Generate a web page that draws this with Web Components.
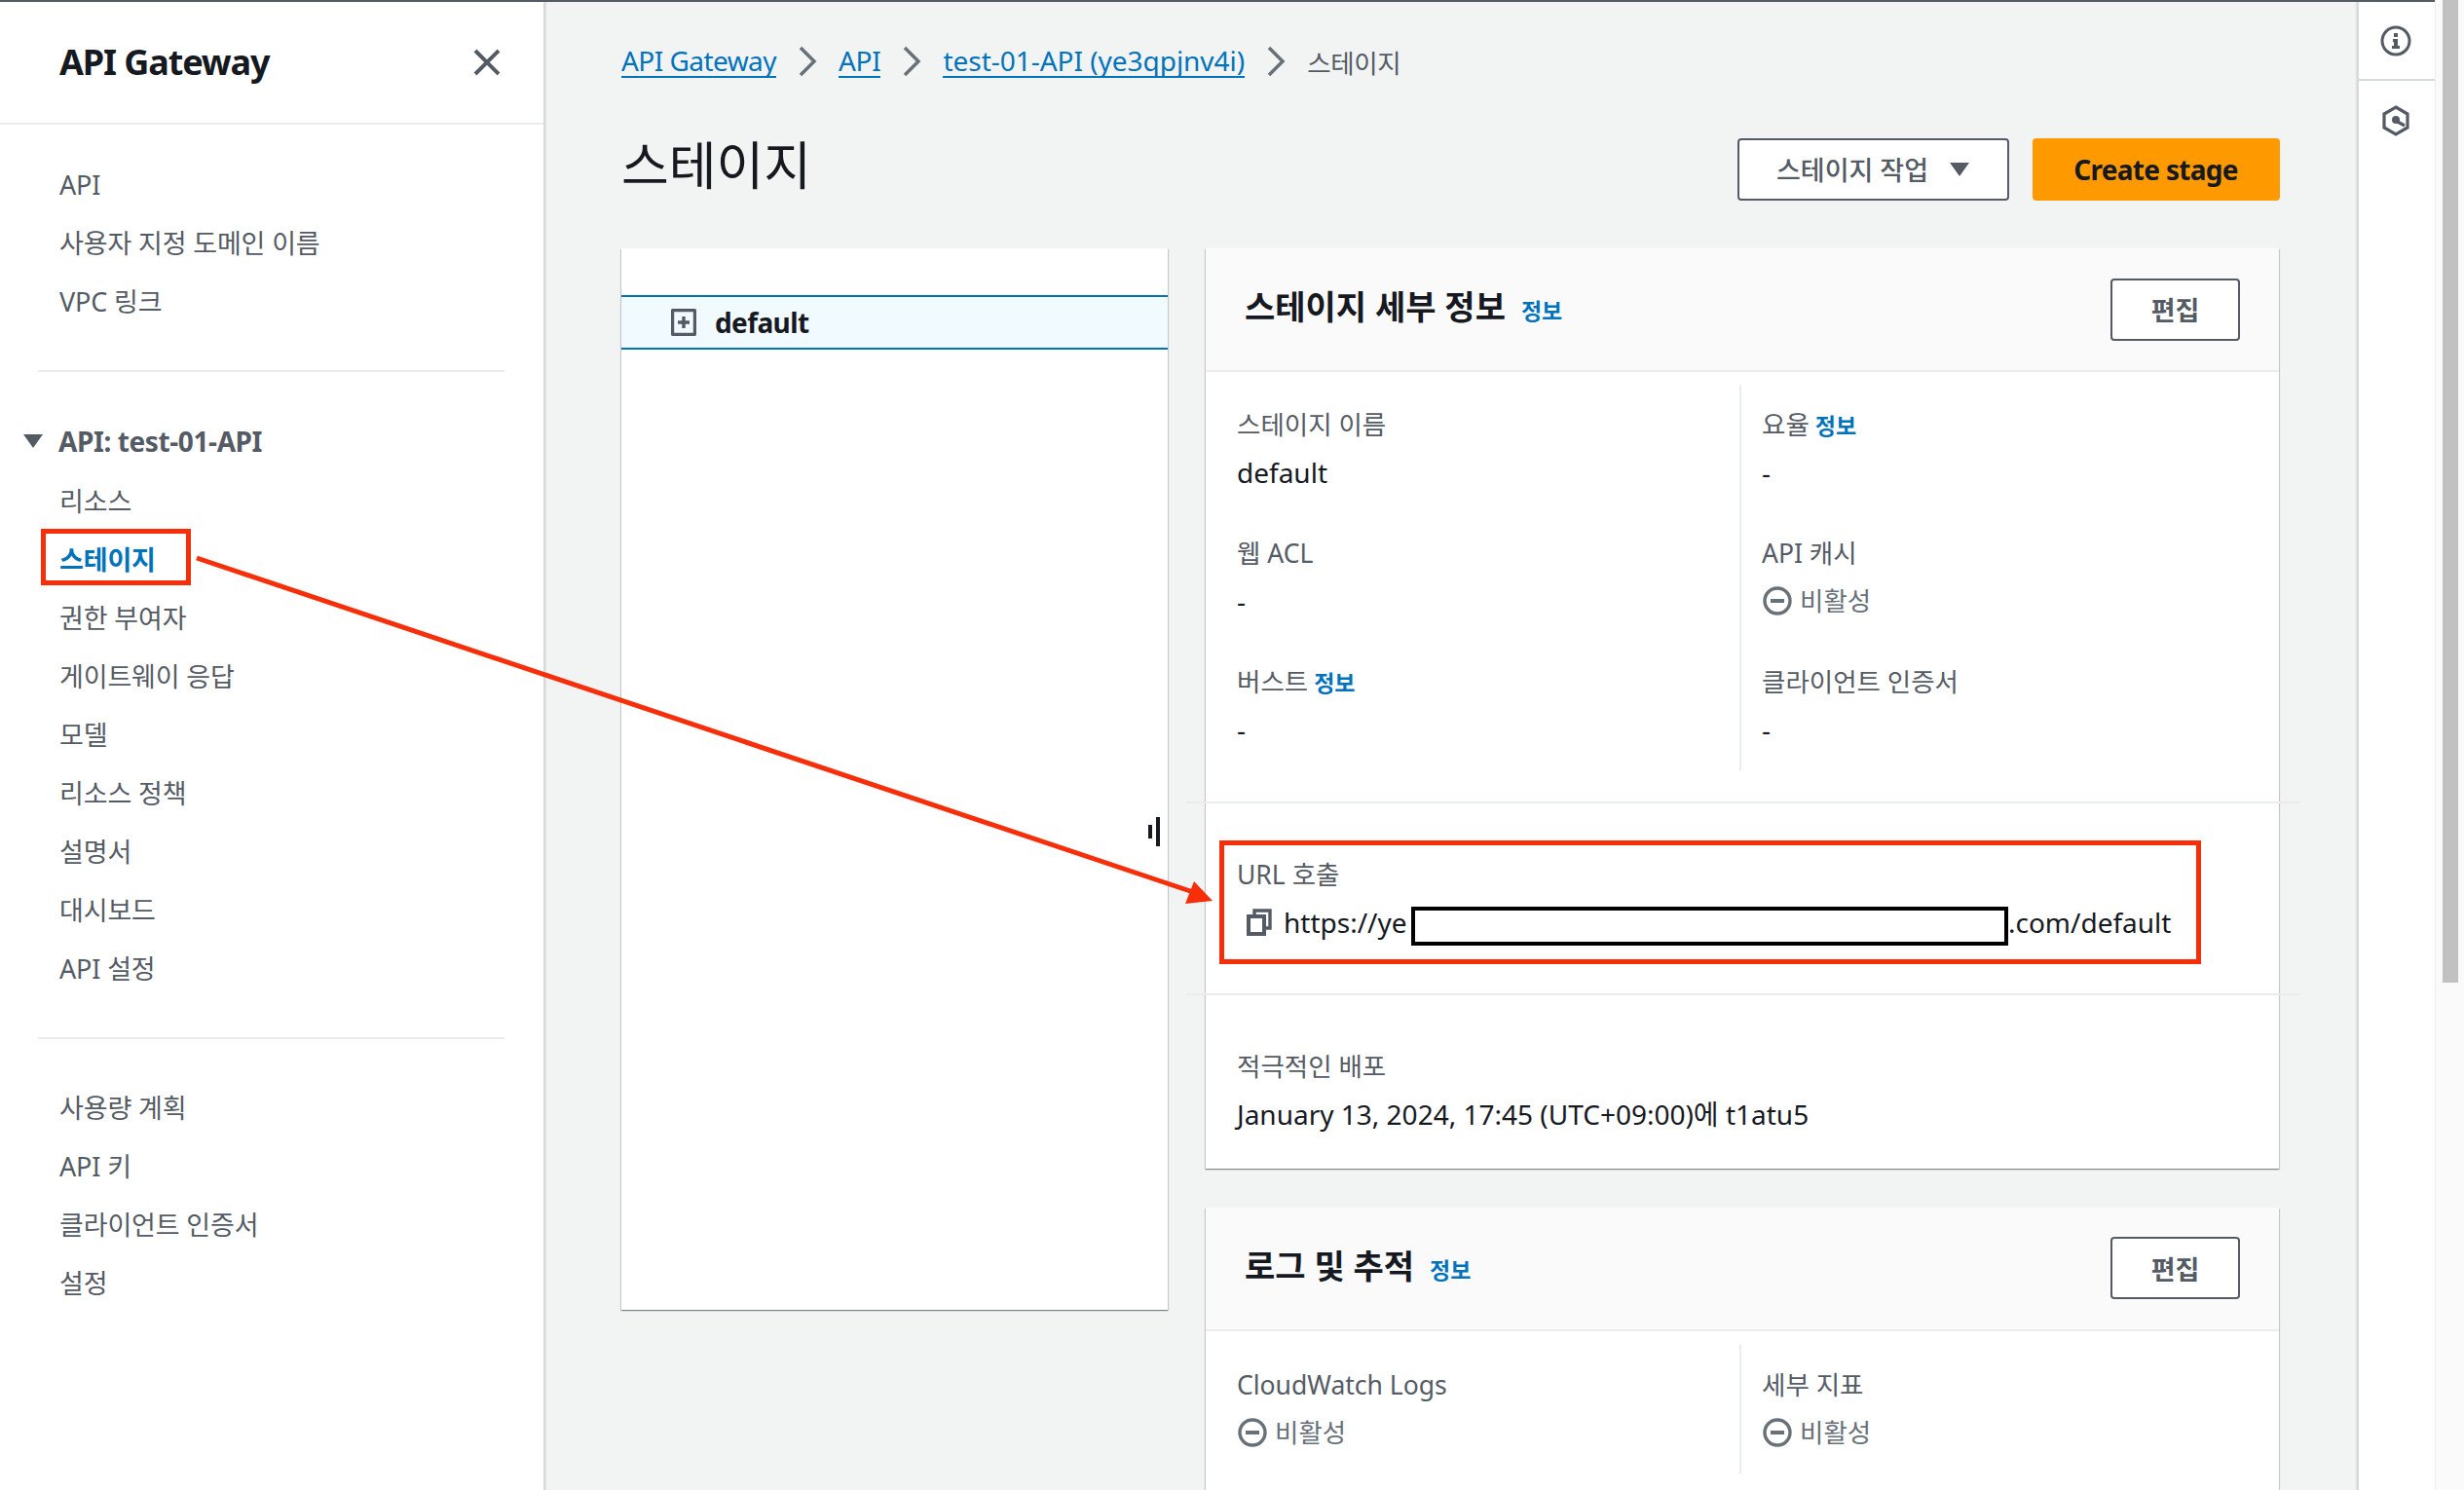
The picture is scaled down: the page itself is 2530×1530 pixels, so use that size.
<!DOCTYPE html>
<html lang="ko">
<head>
<meta charset="utf-8">
<title>스테이지 - API Gateway</title>
<style>
    html, body { margin: 0; height: 1530px; overflow: hidden; }
    body { font-family: "Noto Sans", "Noto Sans CJK KR", sans-serif; font-size: 28px; color: #16191f; background: #f2f3f3; }
</style>
</head>
<body>

<aws-console>
    <aws-sidebar slot="nav" heading="API Gateway">
        <nav-list>
            <nav-item>API</nav-item>
            <nav-item>사용자 지정 도메인 이름</nav-item>
            <nav-item>VPC 링크</nav-item>
        </nav-list>
        <nav-rule></nav-rule>
        <nav-list>
            <nav-group>API: test-01-API</nav-group>
            <nav-item>리소스</nav-item>
            <nav-item active>스테이지</nav-item>
            <nav-item>권한 부여자</nav-item>
            <nav-item>게이트웨이 응답</nav-item>
            <nav-item>모델</nav-item>
            <nav-item>리소스 정책</nav-item>
            <nav-item>설명서</nav-item>
            <nav-item>대시보드</nav-item>
            <nav-item>API 설정</nav-item>
        </nav-list>
        <nav-rule></nav-rule>
        <nav-list>
            <nav-item>사용량 계획</nav-item>
            <nav-item>API 키</nav-item>
            <nav-item>클라이언트 인증서</nav-item>
            <nav-item>설정</nav-item>
        </nav-list>
    </aws-sidebar>

    <bread-crumbs>
        <a style="letter-spacing: -.55px">API Gateway</a><a>API</a><a style="letter-spacing: -.03px">test-01-API (ye3qpjnv4i)</a><span>스테이지</span>
    </bread-crumbs>

    <page-head>
        <span slot="title">스테이지</span>
        <aws-button caret>스테이지 작업</aws-button>
        <aws-button primary>Create stage</aws-button>
    </page-head>

    <stage-split>
        <stage-tree slot="tree">default</stage-tree>

        <detail-card heading="스테이지 세부 정보">
            <aws-button slot="action" small>편집</aws-button>
            <field-grid>
                <kv-field label="스테이지 이름">default</kv-field>
                <kv-field label="요율" info>-</kv-field>
                <kv-field label="웹 ACL">-</kv-field>
                <kv-field label="API 캐시"><status-off>비활성</status-off></kv-field>
                <kv-field label="버스트" info>-</kv-field>
                <kv-field label="클라이언트 인증서">-</kv-field>
            </field-grid>
            <card-section>
                <kv-field label="URL 호출"><invoke-url></invoke-url></kv-field>
            </card-section>
            <card-section last>
                <kv-field label="적극적인 배포">January 13, 2024, 17:45 (UTC+09:00)에 t1atu5</kv-field>
            </card-section>
        </detail-card>

        <detail-card heading="로그 및 추적">
            <aws-button slot="action" small>편집</aws-button>
            <field-grid style="padding-top: 14px">
                <kv-field label="CloudWatch Logs"><status-off>비활성</status-off></kv-field>
                <kv-field label="세부 지표"><status-off>비활성</status-off></kv-field>
            </field-grid>
        </detail-card>
    </stage-split>

    <tools-rail slot="tools"></tools-rail>
</aws-console>

<mark-up></mark-up>

<script>
const ICON_STROKE = '#545b64';

class AwsConsole extends HTMLElement {
    connectedCallback() {
        this.attachShadow({mode: 'open'}).innerHTML = `
            <style>
                :host { display: grid; grid-template-columns: 560px 1fr 80px 30px; grid-template-rows: 2px 1528px; height: 1530px; overflow: hidden; }
                .bar { grid-column: 1 / 4; background: #545b64; }
                main { padding: 0 78px; min-width: 0; }
                .track { grid-column: 4; grid-row: 1 / 3; background: #fafafa; border-left: 1px solid #ececec; padding-left: 7px; }
                .thumb { width: 16px; height: 1009px; background: #c1c1c1; }
            </style>
            <div class="bar"></div>
            <div class="track"><div class="thumb"></div></div>
            <slot name="nav"></slot>
            <main><slot></slot></main>
            <slot name="tools"></slot>`;
    }
}

class AwsSidebar extends HTMLElement {
    connectedCallback() {
        this.attachShadow({mode: 'open'}).innerHTML = `
            <style>
                :host { display: block; background: #fff; border-right: 2px solid #d5dbdb; box-shadow: 1px 0 1px rgba(0,0,0,.06); box-sizing: border-box; }
                header { height: 126px; box-sizing: border-box; border-bottom: 2px solid #eaeded; display: flex; align-items: center; justify-content: space-between; padding: 0 43px 0 61px; }
                h2 { margin: 0; font-size: 36px; font-weight: 700; letter-spacing: -1.1px; color: #16191f; margin-top: -2px; }
                svg { display: block; }
                .body { padding-top: 32px; }
            </style>
            <header>
                <h2>${this.getAttribute('heading')}</h2>
                <svg width="30" height="30" viewBox="0 0 30 30"><path d="M3 3 27 27M27 3 3 27" stroke="${ICON_STROKE}" stroke-width="4" fill="none"/></svg>
            </header>
            <div class="body"><slot></slot></div>`;
    }
}

class NavList extends HTMLElement {
    connectedCallback() {
        this.attachShadow({mode: 'open'}).innerHTML = `
            <style>:host { display: block; }</style><slot></slot>`;
    }
}

class NavItem extends HTMLElement {
    connectedCallback() {
        this.attachShadow({mode: 'open'}).innerHTML = `
            <style>
                :host { display: block; height: 60px; line-height: 60px; padding-left: 61px; color: #545b64; font-size: 27px; letter-spacing: -.15px; white-space: nowrap; }
                :host([active]) { color: #0073bb; font-weight: 700; }
            </style><slot></slot>`;
    }
}

class NavGroup extends HTMLElement {
    connectedCallback() {
        this.attachShadow({mode: 'open'}).innerHTML = `
            <style>
                :host { display: flex; align-items: center; height: 61.5px; padding: 0 0 1.5px 24px; box-sizing: border-box; gap: 16px; color: #545b64; font-size: 28px; font-weight: 700; letter-spacing: -.4px; white-space: nowrap; }
                svg { display: block; }
            </style>
            <svg width="20" height="16" viewBox="0 0 20 16"><path d="M0 1h20L10 15z" fill="${ICON_STROKE}"/></svg>
            <span><slot></slot></span>`;
    }
}

class NavRule extends HTMLElement {
    connectedCallback() {
        this.attachShadow({mode: 'open'}).innerHTML = `
            <style>:host { display: block; height: 2px; background: #eaeded; margin: 40px 40px 41px 39px; }</style>`;
    }
}

class BreadCrumbs extends HTMLElement {
    connectedCallback() {
        const root = this.attachShadow({mode: 'open'});
        const parts = [...this.children];
        const cell = el => el.tagName === 'A'
            ? `<a style="${el.getAttribute('style') || ''}">${el.textContent}</a>`
            : `<span>${el.textContent}</span>`;
        root.innerHTML = `
            <style>
                :host { display: flex; align-items: center; height: 122px; font-size: 28px; letter-spacing: -.3px; white-space: nowrap; }
                a { color: #0073bb; border-bottom: 2px solid #0073bb; line-height: 32px; }
                span { color: #545b64; font-size: 26.5px; }
                svg { display: block; margin: 0 22px; }
            </style>
            ${parts.map((el, i) => cell(el) +
                (i < parts.length - 1 ? `<svg width="20" height="32" viewBox="0 0 20 32"><path d="M3 2 17 16 3 30" stroke="#687078" stroke-width="3.5" fill="none"/></svg>` : '')).join('')}`;
    }
}

class PageHead extends HTMLElement {
    connectedCallback() {
        this.attachShadow({mode: 'open'}).innerHTML = `
            <style>
                :host { display: flex; align-items: center; gap: 24px; height: 84px; margin-bottom: 39.5px; margin-top: 7.5px; padding-right: 1.5px; }
                .title { flex: 1; font-size: 53px; line-height: 84px; color: #16191f; margin-top: -8px; }
            </style>
            <div class="title"><slot name="title"></slot></div>
            <slot></slot>`;
    }
}

class AwsButton extends HTMLElement {
    connectedCallback() {
        const caret = this.hasAttribute('caret') ? `<svg width="20" height="16" viewBox="0 0 20 16"><path d="M0 1h20L10 15z" fill="${ICON_STROKE}"/></svg>` : '';
        this.attachShadow({mode: 'open'}).innerHTML = `
            <style>
                :host { display: inline-flex; align-items: center; justify-content: center; gap: 22px; height: 64px; box-sizing: border-box; padding: 0 38px; background: #fff; border: 2px solid #545b64; border-radius: 4px; color: #545b64; font-size: 27px; font-weight: 700; white-space: nowrap; }
                :host([primary]) { background: #ff9900; border-color: #ff9900; color: #16191f; width: 254px; padding: 0; font-size: 28px; letter-spacing: -.7px; }
                :host([small]) { width: 133px; padding: 0; }
                :host([caret]) { width: 279px; padding: 0; font-weight: 500; }
                svg { display: block; }
            </style><slot></slot>${caret}`;
    }
}

class StageSplit extends HTMLElement {
    connectedCallback() {
        this.attachShadow({mode: 'open'}).innerHTML = `
            <style>
                :host { display: grid; grid-template-columns: 561px 1102px; column-gap: 39px; align-items: start; }
                .cards { display: flex; flex-direction: column; gap: 40px; }
            </style>
            <slot name="tree"></slot>
            <div class="cards"><slot></slot></div>`;
    }
}

class StageTree extends HTMLElement {
    connectedCallback() {
        this.attachShadow({mode: 'open'}).innerHTML = `
            <style>
                :host { display: block; position: relative; height: 1090px; background: #fff; box-shadow: 0 1px 1px 0 rgba(0,28,36,.3), 1px 1px 1px 0 rgba(0,28,36,.15), -1px 1px 1px 0 rgba(0,28,36,.15); }
                .row { position: relative; top: 48px; height: 56px; box-sizing: border-box; border-top: 2px solid #0073bb; border-bottom: 2px solid #0073bb; background: #f1faff; display: flex; align-items: center; padding-left: 51px; gap: 19px; font-weight: 700; letter-spacing: -.6px; color: #16191f; }
                svg { display: block; }
                .grip { position: absolute; left: 541px; top: 584px; width: 12px; height: 30px; }
            </style>
            <div class="row">
                <svg width="26" height="28" viewBox="0 0 26 28"><rect x="1.5" y="1.5" width="23" height="25" rx="1" fill="none" stroke="${ICON_STROKE}" stroke-width="3.4"/><path d="M13 8v12M7 14h12" stroke="${ICON_STROKE}" stroke-width="3.4"/></svg>
                <span><slot></slot></span>
            </div>
            <svg class="grip" viewBox="0 0 12 30"><path d="M0 8h4v14H0zM8 0h4v30H8z" fill="#16191f"/></svg>`;
    }
}

class DetailCard extends HTMLElement {
    connectedCallback() {
        this.attachShadow({mode: 'open'}).innerHTML = `
            <style>
                :host { display: block; background: #fff; box-shadow: 0 1px 1px 0 rgba(0,28,36,.3), 1px 1px 1px 0 rgba(0,28,36,.15), -1px 1px 1px 0 rgba(0,28,36,.15); }
                header { height: 127px; box-sizing: border-box; background: #fafafa; border-bottom: 2px solid #eaeded; display: flex; align-items: center; justify-content: space-between; padding: 0 40px; }
                h2 { margin: 0; font-size: 34px; font-weight: 700; color: #16191f; display: flex; align-items: baseline; gap: 16px; margin-top: -8px; }
                h2 small { font-size: 23px; color: #0073bb; }
            </style>
            <header>
                <h2>${this.getAttribute('heading')}<small>정보</small></h2>
                <slot name="action"></slot>
            </header>
            <slot></slot>`;
    }
}

class FieldGrid extends HTMLElement {
    connectedCallback() {
        this.attachShadow({mode: 'open'}).innerHTML = `
            <style>
                :host { display: grid; grid-template-columns: 550px 1fr; padding: 13px 0 32px; }
                ::slotted(kv-field:nth-child(odd)) { border-right: 2px solid #eaeded; }
            </style><slot></slot>`;
    }
}

class KvField extends HTMLElement {
    connectedCallback() {
        const info = this.hasAttribute('info') ? '<small>정보</small>' : '';
        this.attachShadow({mode: 'open'}).innerHTML = `
            <style>
                :host { display: block; padding: 18px 20px 0 32px; height: 132px; box-sizing: border-box; }
                :host(:nth-child(even)) { padding-left: 21px; }
                .label { color: #545b64; font-size: 26.5px; line-height: 47px; height: 47px; display: flex; gap: 6px; align-items: baseline; white-space: nowrap; }
                .label small { font-size: 23px; color: #0073bb; font-weight: 700; }
                .value { color: #16191f; font-size: 28px; line-height: 50px; white-space: nowrap; }
            </style>
            <div class="label">${this.getAttribute('label')}${info}</div>
            <div class="value"><slot></slot></div>`;
    }
}

class CardSection extends HTMLElement {
    connectedCallback() {
        this.attachShadow({mode: 'open'}).innerHTML = `
            <style>
                :host { display: block; position: relative; height: 197px; margin: 0; padding-top: 30px; box-sizing: border-box; }
                :host([last]) { height: 179.5px; }
                .rule { position: absolute; left: -20px; right: -22px; top: 0; height: 2px; background: #eaeded; }
                ::slotted(kv-field) { height: auto; padding-top: 22px; }
            </style>
            <div class="rule"></div><slot></slot>`;
    }
}

class StatusOff extends HTMLElement {
    connectedCallback() {
        this.attachShadow({mode: 'open'}).innerHTML = `
            <style>
                :host { display: flex; align-items: center; gap: 8px; color: #687078; font-size: 26.5px; margin-left: 1px; }
                svg { display: block; }
            </style>
            <svg width="30" height="30" viewBox="0 0 30 30"><circle cx="15" cy="15" r="13" fill="none" stroke="#687078" stroke-width="3.4"/><path d="M8 15h14" stroke="#687078" stroke-width="4"/></svg>
            <span><slot></slot></span>`;
    }
}

class InvokeUrl extends HTMLElement {
    connectedCallback() {
        this.attachShadow({mode: 'open'}).innerHTML = `
            <style>
                :host { display: flex; align-items: center; height: 50px; margin-left: 10px; width: 950px; }
                svg { display: block; margin-right: 12px; flex: none; }
                .cut { width: 613px; flex: none; height: 40px; box-sizing: border-box; border: 4px solid #000; background: #fff; margin: 0 -13px 0 4px; position: relative; top: 4px; z-index: 1; }
            </style>
            <svg width="26" height="28" viewBox="0 0 26 28"><path d="M8 7V2h16v18h-6" fill="none" stroke="${ICON_STROKE}" stroke-width="3.4"/><rect x="2" y="8" width="16" height="18" fill="none" stroke="${ICON_STROKE}" stroke-width="4"/></svg>
            <span>https://ye</span><div class="cut"></div><span>s.com/default</span>`;
    }
}

class ToolsRail extends HTMLElement {
    connectedCallback() {
        this.attachShadow({mode: 'open'}).innerHTML = `
            <style>
                :host { display: block; background: #fff; border-left: 2px solid #d5dbdb; box-sizing: border-box; box-shadow: -1px 0 1px rgba(0,0,0,.08); }
                div { height: 81px; border-bottom: 2px solid #d5dbdb; box-sizing: border-box; display: flex; justify-content: center; padding: 24px 2px 0 0; }
                div + div { border: 0; padding-top: 25px; }
                svg { display: block; }
            </style>
            <div><svg width="32" height="32" viewBox="0 0 32 32"><circle cx="16" cy="16" r="14" fill="none" stroke="${ICON_STROKE}" stroke-width="3"/><path d="M14 8h4v4h-4zM13 14h5v7h2v3h-8v-3h2v-4h-1z" fill="${ICON_STROKE}"/></svg></div>
            <div><svg width="32" height="32" viewBox="0 0 32 32"><path d="M16 2 28 9v14l-12 7-12-7V9z" fill="none" stroke="${ICON_STROKE}" stroke-width="3.2"/><path d="M16 16l9 5" stroke="${ICON_STROKE}" stroke-width="3.2"/><circle cx="16" cy="15" r="4" fill="${ICON_STROKE}"/></svg></div>`;
    }
}

// 스크린샷 위에 그린 빨간 표시 (화면 위에 떠 있으므로 absolute)
class MarkUp extends HTMLElement {
    connectedCallback() {
        this.attachShadow({mode: 'open'}).innerHTML = `
            <style>
                :host { position: absolute; left: 0; top: 0; width: 2530px; height: 1530px; pointer-events: none; display: block; }
                svg { display: block; }
            </style>
            <svg width="2530" height="1530" viewBox="0 0 2530 1530">
                <rect x="44.5" y="545.5" width="149" height="53" fill="none" stroke="#f62e0a" stroke-width="5"/>
                <rect x="1254.5" y="865.5" width="1003" height="122" fill="none" stroke="#f62e0a" stroke-width="5"/>
                <path d="M202 573 1228 917" stroke="#f62e0a" stroke-width="5" fill="none"/>
                <path d="M1245 925 1217 928 1226 905z" fill="#f62e0a"/>
            </svg>`;
    }
}

customElements.define('aws-console', AwsConsole);
customElements.define('aws-sidebar', AwsSidebar);
customElements.define('nav-list', NavList);
customElements.define('nav-item', NavItem);
customElements.define('nav-group', NavGroup);
customElements.define('nav-rule', NavRule);
customElements.define('bread-crumbs', BreadCrumbs);
customElements.define('page-head', PageHead);
customElements.define('aws-button', AwsButton);
customElements.define('stage-split', StageSplit);
customElements.define('stage-tree', StageTree);
customElements.define('detail-card', DetailCard);
customElements.define('field-grid', FieldGrid);
customElements.define('kv-field', KvField);
customElements.define('card-section', CardSection);
customElements.define('status-off', StatusOff);
customElements.define('invoke-url', InvokeUrl);
customElements.define('tools-rail', ToolsRail);
customElements.define('mark-up', MarkUp);
</script>
</body>
</html>
